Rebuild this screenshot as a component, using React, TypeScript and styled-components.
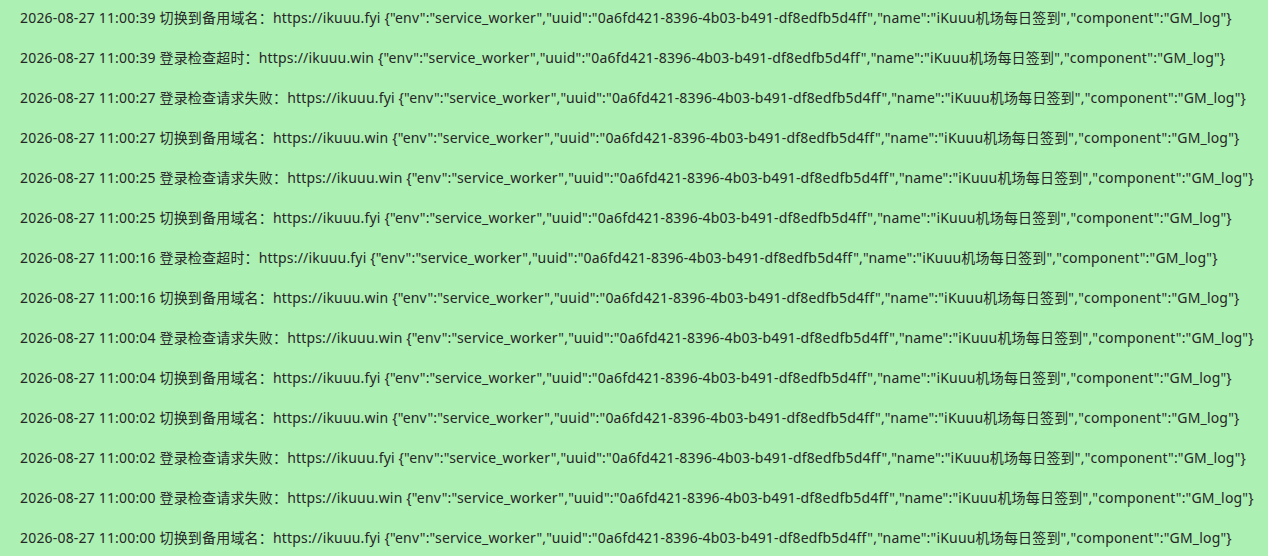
import React from "react";
import styled, { createGlobalStyle } from "styled-components";

const Global = createGlobalStyle`
  html, body { margin: 0; padding: 0; background: #adf0b3; }
  body { font-family: "Noto Sans", "Noto Sans CJK SC", sans-serif; }
`;

const Log = styled.ul`
  list-style: none;
  margin: 0;
  padding: 8px 12px 0 20px;
  display: flex;
  flex-direction: column;
  gap: 20px;
`;

const Line = styled.li`
  font-size: 14px;
  line-height: 20px;
  letter-spacing: 0.18px;
  color: #262626;
  white-space: nowrap;
`;

const uuid = "0a6fd421-8396-4b03-b491-df8edfb5d4ff";
const rows: [string, string, string][] = [
  ["11:00:39", "切换到备用域名", "https://ikuuu.fyi"],
  ["11:00:39", "登录检查超时", "https://ikuuu.win"],
  ["11:00:27", "登录检查请求失败", "https://ikuuu.fyi"],
  ["11:00:27", "切换到备用域名", "https://ikuuu.win"],
  ["11:00:25", "登录检查请求失败", "https://ikuuu.win"],
  ["11:00:25", "切换到备用域名", "https://ikuuu.fyi"],
  ["11:00:16", "登录检查超时", "https://ikuuu.fyi"],
  ["11:00:16", "切换到备用域名", "https://ikuuu.win"],
  ["11:00:04", "登录检查请求失败", "https://ikuuu.win"],
  ["11:00:04", "切换到备用域名", "https://ikuuu.fyi"],
  ["11:00:02", "切换到备用域名", "https://ikuuu.win"],
  ["11:00:02", "登录检查请求失败", "https://ikuuu.fyi"],
  ["11:00:00", "登录检查请求失败", "https://ikuuu.win"],
  ["11:00:00", "切换到备用域名", "https://ikuuu.fyi"],
];

export default function App() {
  return (
    <>
      <Global />
      <Log>
        {rows.map(([t, msg, url], i) => (
          <Line key={i}>
            {`2026-08-27 ${t} ${msg}：${url} {"env":"service_worker","uuid":"${uuid}","name":"iKuuu机场每日签到","component":"GM_log"}`}
          </Line>
        ))}
      </Log>
    </>
  );
}
